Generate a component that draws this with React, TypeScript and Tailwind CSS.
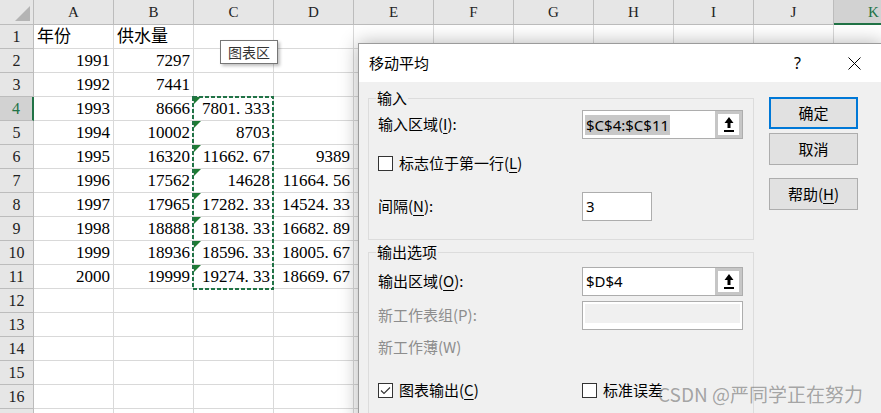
import React from 'react';

const COLS = ['A', 'B', 'C', 'D', 'E', 'F', 'G', 'H', 'I', 'J', 'K'];

type Cell = { v: string; left?: boolean };
const DATA: Record<number, Record<string, Cell>> = {
  1: { A: { v: '年份', left: true }, B: { v: '供水量', left: true } },
  2: { A: { v: '1991' }, B: { v: '7297' } },
  3: { A: { v: '1992' }, B: { v: '7441' } },
  4: { A: { v: '1993' }, B: { v: '8666' }, C: { v: '7801.333' } },
  5: { A: { v: '1994' }, B: { v: '10002' }, C: { v: '8703' } },
  6: { A: { v: '1995' }, B: { v: '16320' }, C: { v: '11662.67' }, D: { v: '9389' } },
  7: { A: { v: '1996' }, B: { v: '17562' }, C: { v: '14628' }, D: { v: '11664.56' } },
  8: { A: { v: '1997' }, B: { v: '17965' }, C: { v: '17282.33' }, D: { v: '14524.33' } },
  9: { A: { v: '1998' }, B: { v: '18888' }, C: { v: '18138.33' }, D: { v: '16682.89' } },
  10: { A: { v: '1999' }, B: { v: '18936' }, C: { v: '18596.33' }, D: { v: '18005.67' } },
  11: { A: { v: '2000' }, B: { v: '19999' }, C: { v: '19274.33' }, D: { v: '18669.67' } },
};

function Num({ s }: { s: string }) {
  const i = s.indexOf('.');
  if (i < 0) return <>{s}</>;
  return (
    <>
      {s.slice(0, i)}
      <span className="pr-[0.25em]">.</span>
      {s.slice(i + 1)}
    </>
  );
}

function U({ c }: { c: string }) {
  return <span className="underline underline-offset-[3px] decoration-1">{c}</span>;
}

function UploadBtn() {
  return (
    <div className="w-[27px] h-full border-[3px] border-[#c6c6c6] bg-white flex items-center justify-center shrink-0">
      <svg width="10" height="16" viewBox="0 0 10 16">
        <polygon points="5,0 9.5,6 6.5,6 6.5,11 3.5,11 3.5,6 0.5,6" fill="#000" />
        <rect x="0" y="13" width="10" height="2" fill="#000" />
      </svg>
    </div>
  );
}

function CheckBox({ checked }: { checked?: boolean }) {
  return (
    <div className="w-[15px] h-[15px] border border-[#333] bg-white shrink-0 flex items-center justify-center">
      {checked && (
        <svg width="13" height="13" viewBox="0 0 13 13">
          <polyline points="2,6.5 5,9.5 11,3.5" fill="none" stroke="#333" strokeWidth="1.1" />
        </svg>
      )}
    </div>
  );
}

export default function App() {
  const rows = Array.from({ length: 17 }, (_, i) => i + 1);
  return (
    <div className="relative w-[881px] h-[413px] overflow-hidden bg-white">
      {/* spreadsheet */}
      <div className="flex flex-col font-['Liberation_Serif','Noto_Sans_CJK_SC',serif] text-black">
        <div className="flex h-[25px] shrink-0">
          <div className="w-[34px] shrink-0 border-r border-b border-[#bcbcbc] bg-[#e6e6e6] relative">
            <svg className="absolute right-[3px] bottom-[3px]" width="15" height="15" viewBox="0 0 15 15">
              <polygon points="15,0 15,15 0,15" fill="#b4b4b4" />
            </svg>
          </div>
          {COLS.map((c) => (
            <div
              key={c}
              className={
                c === 'K'
                  ? 'w-[80px] shrink-0 border-r border-[#bcbcbc] border-b-2 border-b-[#217346] bg-[#d2d2d2] text-center leading-[24px] text-[15px] text-[#217346]'
                  : 'w-[80px] shrink-0 border-r border-b border-[#bcbcbc] bg-[#e6e6e6] text-center leading-[24px] text-[15px] text-[#222]'
              }
            >
              {c}
            </div>
          ))}
        </div>
        {rows.map((r) => (
          <div key={r} className="flex h-[24px] shrink-0">
            <div
              className={
                r === 4
                  ? 'w-[34px] shrink-0 border-b border-[#bcbcbc] border-r-2 border-r-[#217346] bg-[#d2d2d2] text-center leading-[23px] text-[16px] text-[#217346]'
                  : 'w-[34px] shrink-0 border-r border-b border-[#bcbcbc] bg-[#e6e6e6] text-center leading-[23px] text-[16px] text-[#222]'
              }
            >
              {r <= 16 ? r : null}
            </div>
            {COLS.map((c) => {
              const cell = DATA[r]?.[c];
              const tri = c === 'C' && r >= 4 && r <= 11;
              return (
                <div
                  key={c}
                  className={
                    cell?.left
                      ? 'relative w-[80px] shrink-0 border-r border-b border-[#d9d9d9] pl-[3px] text-left leading-[23px] text-[17px] whitespace-nowrap'
                      : 'relative w-[80px] shrink-0 border-r border-b border-[#d9d9d9] pr-[3px] text-right leading-[23px] text-[17px] whitespace-nowrap'
                  }
                >
                  {tri && (
                    <div className="absolute left-0 top-0 w-0 h-0 border-t-[7px] border-r-[7px] border-t-[#1e7b34] border-r-transparent" />
                  )}
                  {cell ? cell.left ? cell.v : <Num s={cell.v} /> : null}
                </div>
              );
            })}
          </div>
        ))}
      </div>

      {/* marching ants */}
      <svg className="absolute left-[192px] top-[96px]" width="82" height="195" viewBox="0 0 82 195">
        <rect x="1" y="1" width="80" height="192" fill="none" stroke="#217346" strokeWidth="2" strokeDasharray="4 2" />
      </svg>

      {/* tooltip */}
      <div className="absolute left-[220px] top-[40px] w-[58px] h-[24px] border border-[#767676] bg-white shadow-[2px_2px_3px_rgba(0,0,0,0.25)] flex items-center justify-center font-['Noto_Sans_CJK_SC',sans-serif] text-[14px] text-[#333]">
        图表区
      </div>

      {/* dialog */}
      <div className="absolute left-[358px] top-[43px] w-[525px] h-[380px] border-l border-t border-[#9b9b9b] shadow-[0_0_18px_rgba(0,0,0,0.3)] bg-[#f0f0f0] font-['Noto_Sans_CJK_SC','Noto_Sans',sans-serif] text-[15px] text-black">
        <div className="h-[38px] bg-white flex items-center">
          <span className="ml-[10px] leading-[20px]">移动平均</span>
          <span className="ml-auto w-[57px] text-center text-[16px] font-['Noto_Sans',sans-serif]">?</span>
          <div className="w-[57px] flex items-center justify-center">
            <svg width="13" height="13" viewBox="0 0 13 13">
              <line x1="0.5" y1="0.5" x2="12.5" y2="12.5" stroke="#000" strokeWidth="1" />
              <line x1="12.5" y1="0.5" x2="0.5" y2="12.5" stroke="#000" strokeWidth="1" />
            </svg>
          </div>
        </div>
        <div className="flex">
          <div className="ml-[9px] w-[386px] shrink-0">
            {/* input group */}
            <div className="mt-[16px] h-[142px] border border-[#dcdcdc]">
              <span className="block w-fit -mt-[11px] ml-[7px] px-[1px] bg-[#f0f0f0] leading-[20px]">输入</span>
              <div className="mt-[2px] h-[29px] flex items-center">
                <span className="w-[213px] pl-[9px] shrink-0">
                  输入区域(<U c="I" />):
                </span>
                <div className="w-[161px] h-full flex border border-[#adadad] bg-white">
                  <div className="flex-1 flex items-center pl-[2px]">
                    <span className="bg-[#c8c8c8] px-[1px] leading-[20px] font-['Noto_Sans',sans-serif]">$C$4:$C$11</span>
                  </div>
                  <UploadBtn />
                </div>
              </div>
              <div className="mt-[10px] h-[28px] flex items-center pl-[9px]">
                <CheckBox />
                <span className="ml-[6px]">
                  标志位于第一行(<U c="L" />)
                </span>
              </div>
              <div className="mt-[15px] h-[29px] flex items-center">
                <span className="w-[213px] pl-[9px] shrink-0">
                  间隔(<U c="N" />):
                </span>
                <div className="w-[70px] h-full flex items-center border border-[#adadad] bg-white pl-[3px] font-['Noto_Sans',sans-serif]">
                  3
                </div>
              </div>
            </div>
            {/* output group */}
            <div className="mt-[12px] h-[200px] border border-[#dcdcdc]">
              <span className="block w-fit -mt-[11px] ml-[7px] px-[1px] bg-[#f0f0f0] leading-[20px]">输出选项</span>
              <div className="mt-[5px] h-[29px] flex items-center">
                <span className="w-[213px] pl-[9px] shrink-0">
                  输出区域(<U c="O" />):
                </span>
                <div className="w-[161px] h-full flex border border-[#adadad] bg-white">
                  <div className="flex-1 flex items-center pl-[3px] font-['Noto_Sans',sans-serif]">$D$4</div>
                  <UploadBtn />
                </div>
              </div>
              <div className="mt-[5px] h-[29px] flex items-center">
                <span className="w-[213px] pl-[9px] shrink-0 text-[#8d8d8d]">新工作表组(P):</span>
                <div className="w-[161px] h-full border border-[#adadad] bg-white p-[2px]">
                  <div className="w-full h-[19px] bg-[#f0f0f0]" />
                </div>
              </div>
              <div className="mt-[5px] h-[24px] flex items-center pl-[9px] text-[#8d8d8d]">新工作薄(W)</div>
              <div className="mt-[19px] h-[24px] flex items-center">
                <div className="w-[213px] pl-[9px] shrink-0 flex items-center">
                  <CheckBox checked />
                  <span className="ml-[6px]">
                    图表输出(<U c="C" />)
                  </span>
                </div>
                <CheckBox />
                <span className="ml-[6px]">标准误差</span>
              </div>
            </div>
          </div>
          {/* buttons */}
          <div className="ml-[15px] pt-[15px] flex flex-col w-[89px] shrink-0">
            <div className="h-[32px] border-2 border-[#0078d7] bg-[#e1e1e1] flex items-center justify-center">确定</div>
            <div className="mt-[4px] h-[32px] border border-[#adadad] bg-[#e1e1e1] flex items-center justify-center">取消</div>
            <div className="mt-[13px] h-[32px] border border-[#adadad] bg-[#e1e1e1] flex items-center justify-center">
              帮助(<U c="H" />)
            </div>
          </div>
        </div>
      </div>

      {/* watermark */}
      <div className="absolute left-[658px] top-[382px] leading-[24px] text-[19px] whitespace-nowrap text-[rgba(120,120,120,0.65)] font-['Noto_Sans_CJK_SC','Noto_Sans',sans-serif]">
        CSDN @严同学正在努力
      </div>
    </div>
  );
}
